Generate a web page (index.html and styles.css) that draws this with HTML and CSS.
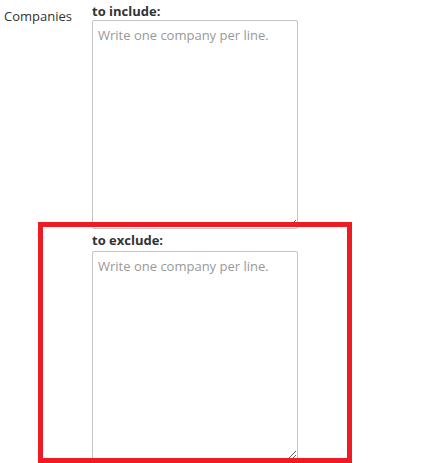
FILE: index.html
```html
<!DOCTYPE html>
<html>
<head>
<meta charset="utf-8">
<link rel="stylesheet" href="styles.css">
</head>
<body>
<div class="row">
  <div class="row-label">Companies</div>
  <div class="fields">
    <label class="field-label">to include:</label>
    <textarea class="box" placeholder="Write one company per line."></textarea>
    <label class="field-label field-label-next">to exclude:</label>
    <textarea class="box" placeholder="Write one company per line."></textarea>
  </div>
</div>
<div class="highlight"></div>
</body>
</html>
```
FILE: styles.css
```css
html, body {
  margin: 0;
  padding: 0;
  background: #fff;
}
body {
  font-family: "Open Sans", sans-serif;
  font-size: 13px;
  line-height: 18px;
  color: #333;
  position: relative;
  height: 463px;
  overflow: hidden;
}
.row {
  display: grid;
  grid-template-columns: 92px 206px;
}
.row-label {
  padding: 7px 0 0 4px;
  color: #333;
}
.fields {
  display: flex;
  flex-direction: column;
  padding-top: 2px;
}
.field-label {
  font-weight: bold;
  display: block;
  height: 18px;
}
.field-label-next {
  margin: 2px 0 2px;
}
.box {
  display: block;
  box-sizing: border-box;
  width: 206px;
  height: 209px;
  margin: 0;
  padding: 5px 5px;
  border: 1px solid #c4c4c4;
  border-radius: 2px;
  font-family: "Open Sans", sans-serif;
  font-size: 13px;
  line-height: 18px;
  color: #333;
  background: #fff;
}
.box::placeholder {
  color: #999;
}
.highlight {
  position: absolute;
  left: 38px;
  top: 222px;
  width: 314px;
  height: 241px;
  box-sizing: border-box;
  border: 5px solid #ed1c24;
}
```
